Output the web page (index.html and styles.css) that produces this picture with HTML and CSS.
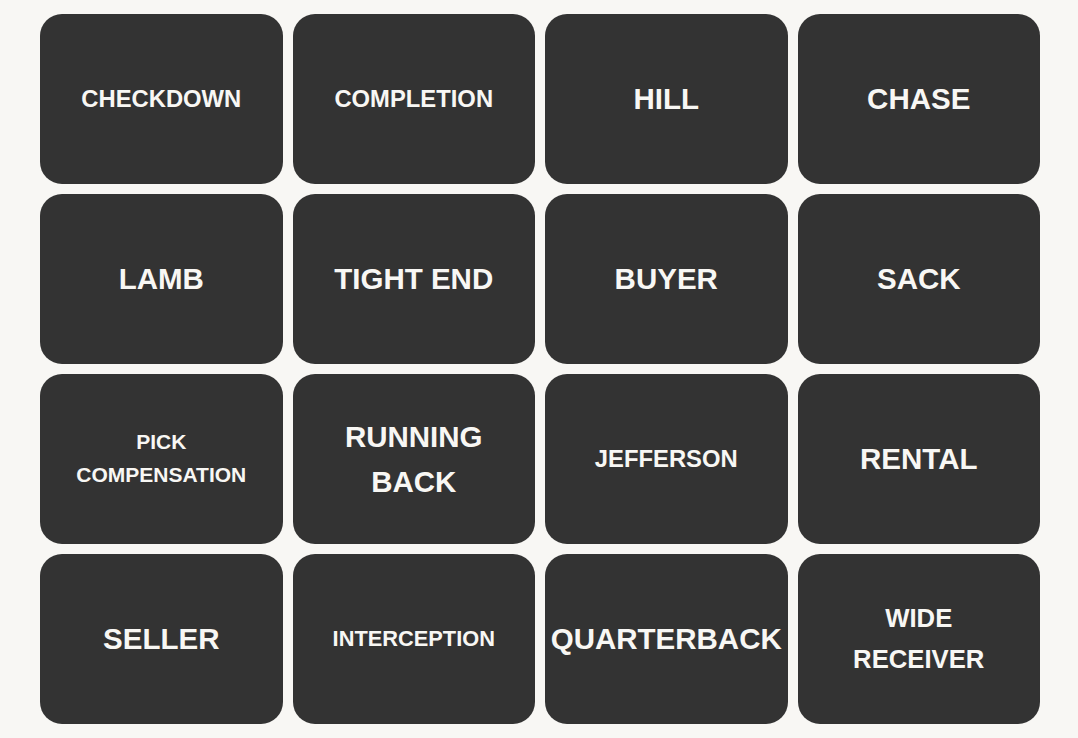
FILE: index.html
```html
<!DOCTYPE html>
<html lang="en">
  <head>
    <meta charset="UTF-8" />
    <meta name="viewport" content="width=device-width, initial-scale=1.0" />
    <title>Connections</title>
    <link rel="stylesheet" href="styles.css">
  </head>
  <body>
    <div class="board">
      <div class="card md">Checkdown</div>
      <div class="card md">Completion</div>
      <div class="card">Hill</div>
      <div class="card">Chase</div>

      <div class="card">Lamb</div>
      <div class="card">Tight End</div>
      <div class="card">Buyer</div>
      <div class="card">Sack</div>

      <div class="card xs">Pick<br>Compensation</div>
      <div class="card">Running<br>Back</div>
      <div class="card md">Jefferson</div>
      <div class="card">Rental</div>

      <div class="card">Seller</div>
      <div class="card sm">Interception</div>
      <div class="card">Quarterback</div>
      <div class="card lg">Wide<br>Receiver</div>
    </div>
  </body>
</html>
```

FILE: styles.css
```css
* {
  box-sizing: border-box;
}

body {
  margin: 0;
  background: #f8f7f4;
  font-family: "Liberation Sans", Arial, sans-serif;
}

.board {
  width: 1000px;
  margin: 14px 0 0 40px;
  display: grid;
  grid-template-columns: repeat(4, 1fr);
  grid-auto-rows: 170px;
  gap: 10px;
}

.card {
  display: flex;
  align-items: center;
  justify-content: center;
  text-align: center;
  background: #333;
  color: #f8f7f4;
  border-radius: 22px;
  font-weight: bold;
  font-size: 29.5px;
  line-height: 1.54;
  text-transform: uppercase;
  white-space: nowrap;
  cursor: pointer;
  user-select: none;
}

.card.lg {
  font-size: 25.7px;
  line-height: 1.6;
}

.card.md {
  font-size: 23.8px;
}

.card.sm {
  font-size: 21.8px;
}

.card.xs {
  font-size: 21px;
  line-height: 1.57;
}
```
